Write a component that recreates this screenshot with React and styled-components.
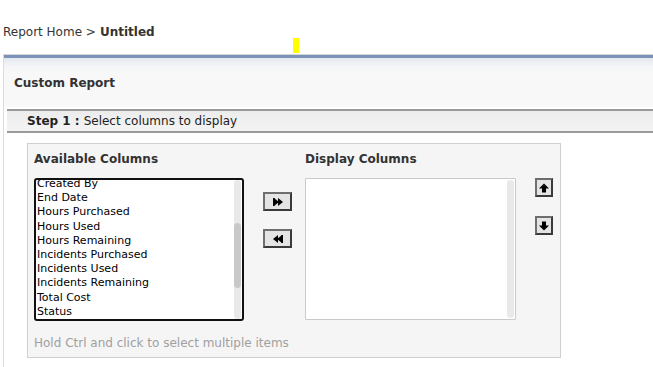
import React from 'react';
import styled, { createGlobalStyle } from 'styled-components';

const GlobalStyle = createGlobalStyle`
  html, body {
    margin: 0;
    padding: 0;
    background: #fff;
  }
  body {
    font-family: "DejaVu Sans", Verdana, sans-serif;
    color: #333;
    overflow: hidden;
  }
`;

const Page = styled.div`
  width: 653px;
  height: 367px;
  position: relative;
`;

const Breadcrumb = styled.div`
  height: 54px;
  padding: 9px 0 0 3px;
  display: flex;
  align-items: center;
  box-sizing: border-box;
  font-size: 12px;
  color: #333;

  b {
    font-weight: bold;
    margin-left: 4px;
  }
`;

const Marker = styled.span`
  position: absolute;
  left: 293px;
  top: 38px;
  width: 6px;
  height: 15px;
  background: #ffff00;
`;

const Panel = styled.section`
  margin-left: 3px;
  border-top: 1px solid #d4d4d4;
  border-left: 1px solid #dcdcdc;
  height: 312px;
`;

const PanelHeader = styled.div`
  height: 49px;
  border-top: 3px solid #7b93b9;
  background: linear-gradient(#e3e8ef 0px, #f4f5f7 8px, #f8f8f8 16px);
  display: flex;
  align-items: center;
  padding-left: 10px;
  font-size: 12px;
  font-weight: bold;
  color: #333;
`;

const StepBar = styled.div`
  margin: 2px 0 0 3px;
  height: 20px;
  border-top: 2px solid #9a9a9a;
  border-bottom: 2px solid #9a9a9a;
  background: linear-gradient(#ececec, #f4f4f4);
  display: flex;
  align-items: center;
  padding-left: 20px;
  font-size: 12px;
  color: #222;

  b {
    margin-right: 4px;
  }
`;

const Chooser = styled.div`
  margin: 10px 0 0 23px;
  width: 534px;
  height: 215px;
  box-sizing: border-box;
  border: 1px solid #cfcfcf;
  background: #f5f5f5;
  padding: 6px 0 0 6px;
  display: grid;
  grid-template-columns: 210px 19px 29px 13px 211px 19px 18px;
  grid-template-rows: 28px 143px auto;
`;

const ColumnTitle = styled.div`
  font-size: 12px;
  font-weight: bold;
  color: #333;
  padding-top: 2px;
  grid-column: ${p => p.$col};
  white-space: nowrap;
`;

const ListBox = styled.div`
  grid-column: ${p => p.$col};
  grid-row: 2;
  box-sizing: border-box;
  background: #fff;
  display: flex;
  overflow: hidden;
  border: ${p => (p.$active ? '2px solid #111' : '1px solid #c9c9c9')};
  border-radius: ${p => (p.$active ? '3px' : '1px')};
  height: ${p => (p.$active ? '143px' : '142px')};
`;

const Options = styled.ul`
  list-style: none;
  margin: -3px 0 0;
  padding: 0 0 0 1px;
  flex: 1;
  font-size: 11px;
  color: #000;
`;

const Option = styled.li`
  height: 14.2px;
  line-height: 14.2px;
  white-space: nowrap;
`;

const Track = styled.div`
  width: 7px;
  margin: ${p => (p.$thin ? '1px 1px 1px 0' : '0 1px 0 0')};
  border-radius: 4px;
  background: #e9e9e9;
  position: relative;
  flex: none;
`;

const Thumb = styled.div`
  position: absolute;
  left: 0;
  right: 0;
  top: 43px;
  height: 65px;
  border-radius: 4px;
  background: #c9c9c9;
`;

const ButtonStack = styled.div`
  grid-column: ${p => p.$col};
  grid-row: 2;
  display: flex;
  flex-direction: column;
  align-items: flex-start;
  gap: ${p => p.$gap}px;
  padding-top: ${p => p.$top}px;
`;

const MoveButton = styled.button`
  width: ${p => p.$w}px;
  height: 19px;
  padding: 0;
  margin: 0;
  box-sizing: border-box;
  border: 2px solid;
  border-color: #6e6e6e #3a3a3a #3a3a3a #6e6e6e;
  background: #e4e4e4;
  display: flex;
  align-items: center;
  justify-content: center;
  cursor: pointer;
`;

const Hint = styled.div`
  grid-column: 1 / 6;
  grid-row: 3;
  font-size: 12px;
  color: #a0a0a0;
  padding-top: 15px;
`;

const DoubleRight = () => (
  <svg width="12" height="10" viewBox="0 0 12 10">
    <rect x="1" y="1" width="1.5" height="8" fill="#000" />
    <polygon points="2,1 7,5 2,9" fill="#000" />
    <polygon points="6,1 11,5 6,9" fill="#000" />
  </svg>
);

const DoubleLeft = () => (
  <svg width="12" height="10" viewBox="0 0 12 10">
    <polygon points="6,1 1,5 6,9" fill="#000" />
    <polygon points="10,1 5,5 10,9" fill="#000" />
    <rect x="9.5" y="1" width="1.5" height="8" fill="#000" />
  </svg>
);

const ArrowUp = () => (
  <svg width="10" height="10" viewBox="0 0 10 10">
    <polygon points="5,0.5 10,5.5 0,5.5" fill="#000" />
    <rect x="3" y="5" width="4" height="4.5" fill="#000" />
  </svg>
);

const ArrowDown = () => (
  <svg width="10" height="10" viewBox="0 0 10 10">
    <rect x="3" y="0.5" width="4" height="4.5" fill="#000" />
    <polygon points="0,4.5 10,4.5 5,9.5" fill="#000" />
  </svg>
);

const available = [
  'Created By',
  'End Date',
  'Hours Purchased',
  'Hours Used',
  'Hours Remaining',
  'Incidents Purchased',
  'Incidents Used',
  'Incidents Remaining',
  'Total Cost',
  'Status',
];

const App = () => {
  return (
    <Page>
      <GlobalStyle />
      <Breadcrumb>
        Report Home &gt;<b>Untitled</b>
      </Breadcrumb>
      <Marker />

      <Panel>
        <PanelHeader>Custom Report</PanelHeader>
        <StepBar>
          <b>Step 1 :</b> Select columns to display
        </StepBar>

        <Chooser>
          <ColumnTitle $col={1}>Available Columns</ColumnTitle>
          <ColumnTitle $col={5}>Display Columns</ColumnTitle>

          <ListBox $col={1} $active>
            <Options>
              {available.map(name => (
                <Option key={name}>{name}</Option>
              ))}
            </Options>
            <Track>
              <Thumb />
            </Track>
          </ListBox>

          <ButtonStack $col={3} $gap={18} $top={14}>
            <MoveButton $w={29} title="Add">
              <DoubleRight />
            </MoveButton>
            <MoveButton $w={29} title="Remove">
              <DoubleLeft />
            </MoveButton>
          </ButtonStack>

          <ListBox $col={5}>
            <Options />
            <Track $thin />
          </ListBox>

          <ButtonStack $col={7} $gap={19} $top={0}>
            <MoveButton $w={18} title="Move up">
              <ArrowUp />
            </MoveButton>
            <MoveButton $w={18} title="Move down">
              <ArrowDown />
            </MoveButton>
          </ButtonStack>

          <Hint>Hold Ctrl and click to select multiple items</Hint>
        </Chooser>
      </Panel>
    </Page>
  );
};

export default App;
